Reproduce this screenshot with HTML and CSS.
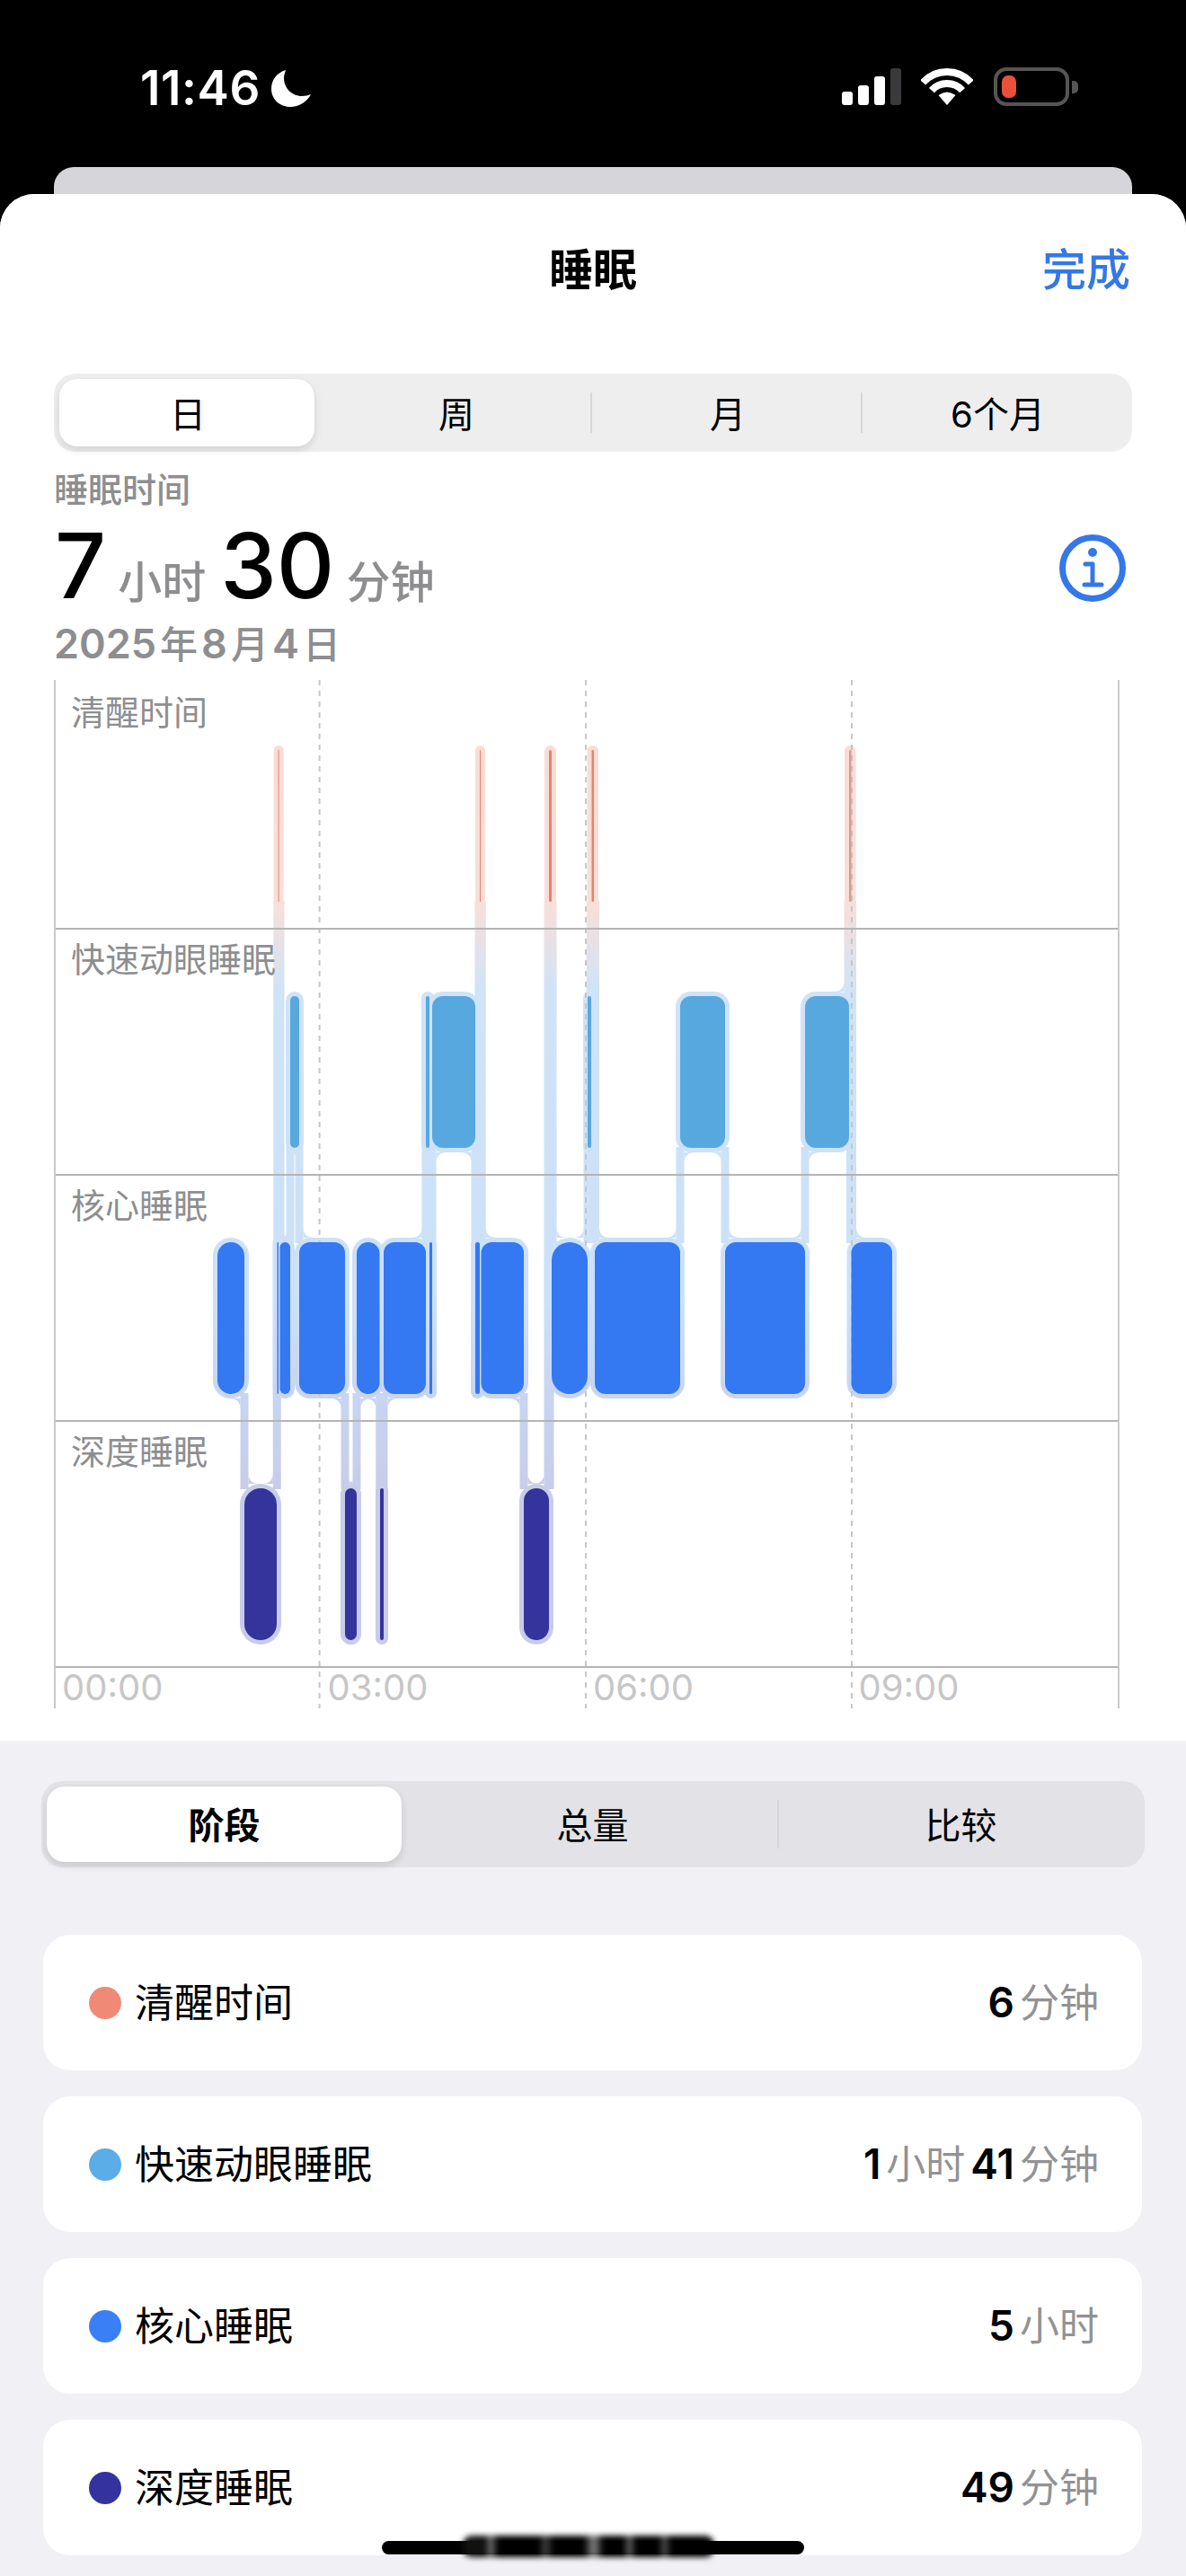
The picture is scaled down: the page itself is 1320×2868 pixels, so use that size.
FILE: index.html
```html
<!DOCTYPE html>
<html lang="zh-CN">
<head>
    <meta charset="UTF-8">
    <title>睡眠</title>
    <link rel="stylesheet" href="styles.css">
</head>
<body>
    <div class="status-bar">
        <div class="status-left">
            <span class="clock">11:46</span>
            <svg class="moon" viewBox="0 0 44 41"><path d="M16 0C6 3 0 11 0 21C0 32 9 41 21 41C31 41 40 35 44 27C41 28 38 29 34 29C23 29 14 20 14 9C14 6 15 3 16 0Z" fill="#fff"/></svg>
        </div>
        <div class="status-right">
            <div class="signal">
                <i class="bar-1"></i><i class="bar-2"></i><i class="bar-3"></i><i class="bar-4"></i>
            </div>
            <svg class="wifi" viewBox="0 0 58 42">
                <path d="M2.2 16.9A36 36 0 0 1 55.8 16.9" fill="none" stroke="#fff" stroke-width="8"/>
                <path d="M11.9 25.6A23 23 0 0 1 46.1 25.6" fill="none" stroke="#fff" stroke-width="8"/>
                <path d="M29 42L19.5 31Q29 24 38.5 31Z" fill="#fff"/>
            </svg>
            <div class="battery"><div class="battery-level"></div></div>
            <div class="battery-nub"></div>
        </div>
    </div>
    <div class="back-card"></div>

    <div class="sheet">
        <div class="sheet-top">
            <header class="nav">
                <h1>睡眠</h1>
                <a class="done" href="#">完成</a>
            </header>

            <div class="segmented range">
                <div class="seg-item active">日</div>
                <div class="seg-item">周</div>
                <div class="seg-item sep">月</div>
                <div class="seg-item sep">6个月</div>
            </div>

            <div class="summary">
                <div class="summary-text">
                    <div class="summary-label">睡眠时间</div>
                    <div class="summary-total">
                        <b>7</b><span class="unit first">小时</span><b>30</b><span class="unit">分钟</span>
                    </div>
                    <div class="summary-date">2025<span>年</span>8<span>月</span>4<span>日</span></div>
                </div>
                <svg class="info" viewBox="0 0 74 75">
                    <ellipse cx="37" cy="37.5" rx="33.5" ry="34" fill="none" stroke="#3478e8" stroke-width="7"/>
                    <circle cx="37" cy="20" r="5" fill="#3478e8"/>
                    <path d="M29 33H37V56M28 56H47" fill="none" stroke="#3478e8" stroke-width="5" stroke-linecap="round" stroke-linejoin="round"/>
                </svg>
            </div>

            <div class="chart">
                <svg class="chart-plot" id="sleepPlot" viewBox="60 757 1186 1145">
                    <defs>
                        <linearGradient id="haloFill" gradientUnits="userSpaceOnUse" x1="0" y1="831" x2="0" y2="1831">
                            <stop offset="0" stop-color="#f9dcd6"/>
                            <stop offset="0.18" stop-color="#f7dfda"/>
                            <stop offset="0.27" stop-color="#d0e3f7"/>
                            <stop offset="0.62" stop-color="#cbe1f8"/>
                            <stop offset="0.73" stop-color="#c8d4f0"/>
                            <stop offset="0.83" stop-color="#c7cde9"/>
                            <stop offset="1" stop-color="#c7cde9"/>
                        </linearGradient>
                    </defs>
                    <g id="halos" fill="url(#haloFill)"></g>
                    <g class="hour-lines">
                        <line x1="355.6" y1="757" x2="355.6" y2="1902"/>
                        <line x1="652" y1="757" x2="652" y2="1902"/>
                        <line x1="948" y1="757" x2="948" y2="1902"/>
                    </g>
                    <g id="blocks"></g>
                </svg>
                <div class="chart-row first">清醒时间</div>
                <div class="chart-row">快速动眼睡眠</div>
                <div class="chart-row">核心睡眠</div>
                <div class="chart-row">深度睡眠</div>
                <div class="chart-times">
                    <span>00:00</span><span>03:00</span><span>06:00</span><span>09:00</span>
                </div>
            </div>
        </div>

        <div class="sheet-bottom">
            <div class="segmented mode">
                <div class="seg-item active">阶段</div>
                <div class="seg-item">总量</div>
                <div class="seg-item sep">比较</div>
            </div>

            <div class="stage-list">
                <div class="stage-card">
                    <span class="dot awake"></span>
                    <span class="stage-name">清醒时间</span>
                    <span class="stage-value"><b>6</b>分钟</span>
                </div>
                <div class="stage-card">
                    <span class="dot rem"></span>
                    <span class="stage-name">快速动眼睡眠</span>
                    <span class="stage-value"><b>1</b>小时<b>41</b>分钟</span>
                </div>
                <div class="stage-card">
                    <span class="dot core"></span>
                    <span class="stage-name">核心睡眠</span>
                    <span class="stage-value"><b>5</b>小时</span>
                </div>
                <div class="stage-card">
                    <span class="dot deep"></span>
                    <span class="stage-name">深度睡眠</span>
                    <span class="stage-value"><b>49</b>分钟</span>
                </div>
            </div>
        </div>

        <div class="home-indicator"></div>
        <div class="smudge"></div>
    </div>

    <script src="chart.js"></script>
</body>
</html>
```

FILE: styles.css
```css
* {
    margin: 0;
    padding: 0;
    box-sizing: border-box;
}

body {
    width: 1320px;
    height: 2868px;
    overflow: hidden;
    background-color: #000;
    font-family: Inter, "Noto Sans CJK SC", sans-serif;
}

.status-bar {
    height: 186px;
    padding: 75px 120px 0 156px;
    display: flex;
    justify-content: space-between;
    align-items: flex-start;
}

.status-left {
    display: flex;
    align-items: flex-start;
    gap: 12px;
}

.clock {
    color: #fff;
    font-size: 53px;
    font-weight: 600;
    line-height: 46px;
    letter-spacing: 0.6px;
}

.moon {
    width: 44px;
    height: 41px;
    margin-top: 3px;
}

.status-right {
    display: flex;
    align-items: flex-start;
}

.signal {
    display: flex;
    align-items: flex-end;
    gap: 6px;
    height: 41px;
    margin-top: 1px;
}

.signal i {
    display: block;
    width: 12px;
    border-radius: 3px;
    background-color: #fff;
}

.signal .bar-1 { height: 15px; }
.signal .bar-2 { height: 22px; }
.signal .bar-3 { height: 32px; }
.signal .bar-4 { height: 41px; background-color: #3a3a3c; }

.wifi {
    width: 58px;
    height: 42px;
    margin-left: 22px;
}

.battery {
    width: 84px;
    height: 43px;
    margin-left: 23px;
    padding: 5px;
    border: 4px solid #555;
    border-radius: 14px;
}

.battery-level {
    width: 16px;
    height: 100%;
    background-color: #e8503a;
    border-radius: 7px;
}

.battery-nub {
    width: 7px;
    height: 14px;
    margin: 15px 0 0 3px;
    background-color: #555;
    border-radius: 0 5px 5px 0;
}

.back-card {
    height: 50px;
    margin: 0 60px -20px;
    background-color: #d5d5da;
    border-radius: 22px 22px 0 0;
}

.sheet {
    position: relative;
    height: 2652px;
    background-color: #f0f0f5;
    border-radius: 38px 38px 0 0;
    overflow: hidden;
}

.sheet-top {
    height: 1722px;
    background-color: #fff;
}

.nav {
    position: relative;
    height: 200px;
    padding-top: 55px;
    text-align: center;
}

.nav h1 {
    font-size: 49px;
    font-weight: 700;
    line-height: 60px;
    color: #000;
}

.done {
    position: absolute;
    top: 55px;
    right: 62px;
    font-size: 49px;
    font-weight: 500;
    line-height: 60px;
    color: #3478e8;
    text-decoration: none;
}

.segmented {
    display: grid;
    background-color: #eeeeef;
    border-radius: 24px;
    color: #000;
    text-align: center;
}

.seg-item {
    position: relative;
    display: flex;
    align-items: center;
    justify-content: center;
}

.seg-item.active {
    margin: 6px 7px 6px 6px;
    background-color: #fff;
    border-radius: 20px;
    box-shadow: 0 4px 10px rgba(0, 0, 0, 0.12);
}

.seg-item.sep::before {
    content: "";
    position: absolute;
    left: 0;
    top: 21px;
    bottom: 21px;
    width: 2px;
    background-color: #d6d6d8;
}

.range {
    grid-template-columns: 297px 300px 301px 300px;
    height: 87px;
    margin: 0 60px 0 60px;
    font-size: 40px;
}

.range .seg-item {
    padding: 0 0 2px 2px;
}

.range .seg-item.sep {
    padding-left: 5px;
}

.summary {
    display: flex;
    justify-content: space-between;
    align-items: flex-start;
    margin: 0 67px 0 60px;
    padding-top: 17px;
    height: 254px;
}

.summary-label {
    margin-bottom: 7px;
    font-size: 38px;
    font-weight: 500;
    line-height: 50px;
    color: #8e8e90;
}

.summary-total {
    display: flex;
    align-items: baseline;
    height: 112px;
    padding-left: 1px;
    line-height: 106px;
    color: #000;
}

.summary-total b {
    font-size: 100px;
    font-weight: 500;
}

.unit {
    margin: 0 16px 0 13px;
    font-size: 49px;
    font-weight: 500;
    line-height: 50px;
    color: #8e8e90;
}

.summary-date {
    font-size: 45px;
    font-weight: 600;
    line-height: 56px;
    color: #8e8e90;
}

.summary-date span {
    margin: 0 4px;
    font-size: 42px;
    font-weight: 500;
}

.info {
    width: 74px;
    height: 75px;
    margin-top: 75px;
}

.chart {
    position: relative;
    width: 1186px;
    margin-left: 60px;
    border-left: 2px solid #cacacc;
    border-right: 2px solid #cacacc;
}

.chart-plot {
    position: absolute;
    left: -2px;
    top: 0;
    width: 1186px;
    height: 1145px;
}

.hour-lines line {
    stroke: #c6c6c8;
    stroke-width: 2;
    stroke-dasharray: 6 6;
}

.chart-row {
    position: relative;
    height: 274px;
    padding: 8px 0 0 17px;
    border-bottom: 2px solid #b4b4b6;
    font-size: 38px;
    line-height: 50px;
    color: #8e8e90;
}

.chart-row.first {
    height: 278px;
    padding-top: 11px;
}

.chart-times {
    position: relative;
    display: flex;
    height: 45px;
    font-size: 40px;
    line-height: 44px;
    color: #c6c6c8;
}

.chart-times span {
    width: 296.25px;
    padding-left: 7px;
}

.sheet-bottom {
    padding: 45px 46px 0;
}

.mode {
    grid-template-columns: 408px 411px 409px;
    height: 96px;
    background-color: #e2e2e7;
    font-size: 40px;
}

.mode .seg-item {
    padding-bottom: 2px;
}

.mode .active {
    font-weight: 700;
}

.stage-list {
    display: flex;
    flex-direction: column;
    gap: 29px;
    margin: 75px 3px 0 2px;
}

.stage-card {
    display: flex;
    align-items: center;
    height: 151px;
    padding: 0 48px 6px 51px;
    background-color: #fff;
    border-radius: 30px;
    font-size: 44px;
    color: #000;
}

.dot {
    width: 36px;
    height: 36px;
    margin-right: 15px;
    border-radius: 50%;
    transform: translateY(3px);
}

.dot.awake { background-color: #f08a76; }
.dot.rem { background-color: #5aade6; }
.dot.core { background-color: #3a7ff5; }
.dot.deep { background-color: #34329e; }

.stage-value {
    margin-left: auto;
    font-size: 44px;
    color: #929294;
}

.stage-value b {
    margin: 0 6px;
    font-size: 46px;
    font-weight: 600;
    color: #000;
}

.home-indicator {
    position: absolute;
    left: 425px;
    top: 2613px;
    width: 470px;
    height: 15px;
    background-color: #000;
    border-radius: 8px;
}

.smudge {
    position: absolute;
    left: 515px;
    top: 2607px;
    width: 280px;
    height: 24px;
    background: linear-gradient(90deg, #111 0 9%, #777 11%, #000 14% 30%, #444 33%, #000 36% 48%, #888 52%, #000 56% 64%, #666 66%, #000 69% 78%, #555 80%, #000 83% 100%);
    border-radius: 10px;
    filter: blur(3px);
}
```

FILE: chart.js
```js
const rows = {
    awake: { top: 835, bottom: 1004, level: 0, color: "#e8836c" },
    rem: { top: 1109, bottom: 1278, level: 1, color: "#58a8e0" },
    core: { top: 1383, bottom: 1552, level: 2, color: "#3478f2" },
    deep: { top: 1657, bottom: 1826, level: 3, color: "#35339c" }
};

// stage, start x, end x (page pixels), optional colour
const segments = [
    ["core", 242, 272], ["deep", 272, 308], ["core", 308.5, 310],
    ["awake", 309.6, 310.6], ["core", 311.5, 323], ["rem", 323, 333],
    ["core", 333, 384], ["deep", 384, 397], ["core", 397, 422.5],
    ["deep", 423, 427], ["core", 427, 474], ["rem", 474, 478],
    ["core", 478, 481], ["rem", 481, 529], ["core", 529, 534],
    ["awake", 534, 535], ["core", 535.5, 583], ["deep", 583, 611],
    ["awake", 611, 614], ["core", 614, 654], ["rem", 654, 658],
    ["awake", 658.5, 661], ["core", 662, 757], ["rem", 757, 807],
    ["core", 807, 896], ["rem", 896, 945], ["awake", 945, 947.5, "#dc9a8c"],
    ["core", 947.5, 993]
];

const HALO = 5;
const FILLET = 12;
const halos = document.getElementById("halos");
const blocks = document.getElementById("blocks");

function add(parent, tag, attrs) {
    const el = document.createElementNS("http://www.w3.org/2000/svg", tag);
    for (const key in attrs) el.setAttribute(key, attrs[key]);
    parent.appendChild(el);
}

function cornerRadius(stage, width) {
    if (stage === "deep") return Math.min(width / 2, 18);
    return width < 45 ? width / 2 : 12;
}

// curved piece between a connector's side and the edge of a halo
function fillet(x, y, dir, vert, r) {
    add(halos, "path", {
        d: `M${x} ${y}H${x + dir * r}Q${x} ${y} ${x} ${y + vert * r}Z`
    });
}

segments.forEach(([stage, x0, x1, color]) => {
    const row = rows[stage];
    const w = x1 - x0;
    const r = cornerRadius(stage, w);
    add(halos, "rect", {
        x: x0 - HALO, y: row.top - HALO,
        width: w + HALO * 2, height: row.bottom - row.top + HALO * 2,
        rx: r + HALO
    });
    add(blocks, "rect", {
        x: x0, y: row.top, width: w, height: row.bottom - row.top,
        rx: r, fill: color || row.color
    });
});

for (let i = 0; i < segments.length - 1; i++) {
    const a = segments[i];
    const b = segments[i + 1];
    const x = (a[2] + b[1]) / 2;
    const half = a[0] === "awake" || b[0] === "awake" ? 5.5 : 4.5;
    const aOnTop = rows[a[0]].level < rows[b[0]].level;
    const upper = aOnTop ? a : b;
    const lower = aOnTop ? b : a;
    const y0 = rows[upper[0]].bottom + HALO;
    const y1 = rows[lower[0]].top - HALO;

    add(halos, "rect", { x: x - half, y: y0 - 6, width: half * 2, height: y1 - y0 + 12 });

    const upperR = Math.min(FILLET, (upper[2] - upper[1]) / 2);
    const lowerR = Math.min(FILLET, (lower[2] - lower[1]) / 2);
    if (aOnTop) {
        fillet(x - half, y0, -1, 1, upperR);
        fillet(x + half, y1, 1, -1, lowerR);
    } else {
        fillet(x + half, y0, 1, 1, upperR);
        fillet(x - half, y1, -1, -1, lowerR);
    }
}
```
